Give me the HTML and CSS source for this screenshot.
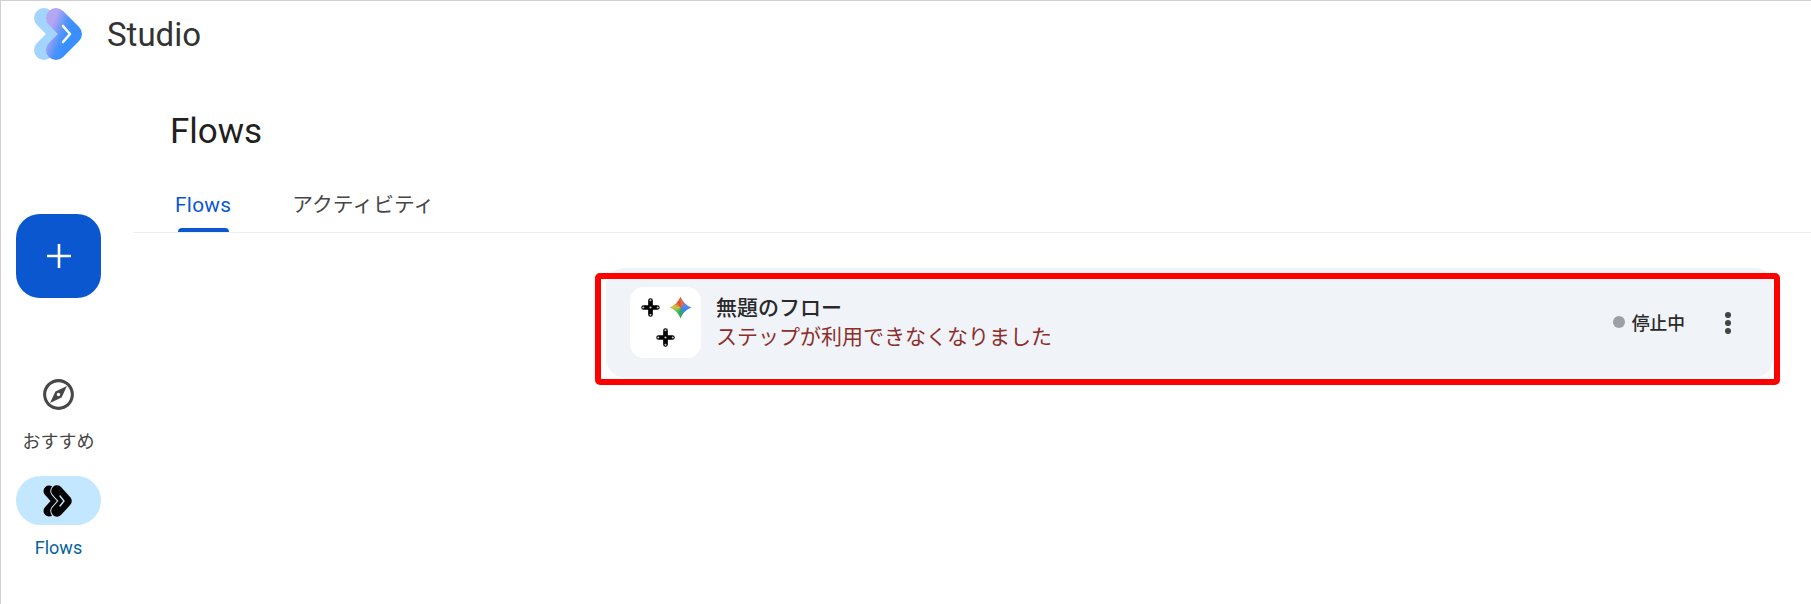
FILE: index.html
```html
<!DOCTYPE html>
<html lang="ja">
<head>
<meta charset="utf-8">
<title>Studio</title>
<link rel="stylesheet" href="styles.css">
</head>
<body>
<div class="app">
  <header class="topbar">
    <svg class="logo" width="52" height="56" viewBox="33 6 52 56" aria-hidden="true">
      <defs>
        <linearGradient id="logoGrad" gradientUnits="userSpaceOnUse" x1="48" y1="30" x2="68" y2="38">
          <stop offset="0.1" stop-color="#b3a6f3"/>
          <stop offset="0.7" stop-color="#4a93fb"/>
          <stop offset="1" stop-color="#3a8fff"/>
        </linearGradient>
      </defs>
      <path d="M44 18 L60 34 L44 50" fill="none" stroke="#a2d4fd" stroke-width="20" stroke-linecap="round" stroke-linejoin="round"/>
      <path d="M56 18 L72 34 L56 50" fill="none" stroke="url(#logoGrad)" stroke-width="20" stroke-linecap="round" stroke-linejoin="round"/>
      <path d="M63 26 L70 34 L63 42" fill="none" stroke="#fff" stroke-width="2.6" stroke-linecap="round" stroke-linejoin="round"/>
    </svg>
    <span class="brand">Studio</span>
  </header>
  <div class="layout">
    <nav class="rail">
      <button class="fab" aria-label="作成">
        <svg width="26" height="26" viewBox="0 0 26 26" aria-hidden="true"><path d="M13 1V25M1 13H25" stroke="#fff" stroke-width="2.6" fill="none"/></svg>
      </button>
      <a class="rail-item">
        <span class="rail-icon">
          <svg width="37" height="37" viewBox="0 0 24 24" aria-hidden="true"><path fill="#474747" d="M12 2C6.48 2 2 6.48 2 12s4.48 10 10 10 10-4.48 10-10S17.52 2 12 2zm0 18c-4.41 0-8-3.59-8-8s3.59-8 8-8 8 3.59 8 8-3.59 8-8 8zm-5.5-2.5l7.51-3.49L17.5 6.5 9.99 9.99 6.5 17.5zm5.5-6.6c.61 0 1.1.49 1.1 1.1s-.49 1.1-1.1 1.1-1.1-.49-1.1-1.1.49-1.1 1.1-1.1z"/></svg>
        </span>
        <span class="rail-label">おすすめ</span>
      </a>
      <a class="rail-item rail-item-active">
        <span class="rail-icon rail-pill">
          <svg width="34" height="34" viewBox="0 0 34 34" aria-hidden="true">
            <path d="M7 7 L16 17 L7 27" fill="none" stroke="#000" stroke-width="11" stroke-linecap="round" stroke-linejoin="round"/>
            <path d="M15 7 L24 17 L15 27" fill="none" stroke="#c2e7ff" stroke-width="13.5" stroke-linecap="round" stroke-linejoin="round"/>
            <path d="M15 7 L24 17 L15 27" fill="none" stroke="#000" stroke-width="11.5" stroke-linecap="round" stroke-linejoin="round"/>
            <path d="M18 12 L22 17 L18 22" fill="none" stroke="#c2e7ff" stroke-width="1.4" stroke-linecap="round" stroke-linejoin="round"/>
          </svg>
        </span>
        <span class="rail-label">Flows</span>
      </a>
    </nav>
    <main class="main">
      <h1 class="page-title">Flows</h1>
      <div class="tabs">
        <a class="tab tab-active">Flows</a>
        <a class="tab">アクティビティ</a>
      </div>
      <section class="card">
        <div class="thumb">
          <svg class="cross" width="19" height="19" viewBox="0 0 22 22" aria-hidden="true">
            <path d="M11 3V19M3 11H19" stroke="#000" stroke-width="5.4" stroke-linecap="round" fill="none"/>
            <g fill="#c8c8c8"><circle cx="11" cy="11" r="1.3"/><circle cx="11" cy="2.6" r="1.2"/><circle cx="11" cy="19.4" r="1.2"/><circle cx="2.6" cy="11" r="1.2"/><circle cx="19.4" cy="11" r="1.2"/></g>
          </svg>
          <span class="sparkle"></span>
          <svg class="cross cross-last" width="19" height="19" viewBox="0 0 22 22" aria-hidden="true">
            <path d="M11 3V19M3 11H19" stroke="#000" stroke-width="5.4" stroke-linecap="round" fill="none"/>
            <g fill="#c8c8c8"><circle cx="11" cy="11" r="1.3"/><circle cx="11" cy="2.6" r="1.2"/><circle cx="11" cy="19.4" r="1.2"/><circle cx="2.6" cy="11" r="1.2"/><circle cx="19.4" cy="11" r="1.2"/></g>
          </svg>
        </div>
        <div class="card-text">
          <div class="card-title">無題のフロー</div>
          <div class="card-error">ステップが利用できなくなりました</div>
        </div>
        <div class="status"><span class="status-dot"></span><span>停止中</span></div>
        <div class="kebab" aria-label="メニュー"><i></i><i></i><i></i></div>
        <div class="annotation"></div>
      </section>
    </main>
  </div>
</div>
</body>
</html>
```
FILE: styles.css
```css
* { box-sizing: border-box; }
html, body { margin: 0; height: 100%; background: #fff; }
body {
  font-family: Roboto, "Noto Sans CJK JP", sans-serif;
  color: #1f1f1f;
  overflow: hidden;
}
.app {
  height: 604px;
  border-top: 1px solid #d0d0d0;
  border-left: 1px solid #d0d0d0;
  display: flex;
  flex-direction: column;
}
.topbar {
  height: 70px;
  display: flex;
  align-items: flex-start;
  padding-left: 32px;
}
.logo { margin-top: 5px; flex: none; }
.brand {
  margin-left: 22px;
  margin-top: 15px;
  font-size: 33px;
  line-height: 38px;
  color: #333;
}
.layout { flex: 1; display: flex; min-height: 0; }
.rail {
  width: 132px;
  flex: none;
  padding: 143px 0 0 15px;
  display: flex;
  flex-direction: column;
}
.fab {
  width: 85px;
  height: 84px;
  border: 0;
  padding: 0;
  border-radius: 24px;
  background: #0b57d0;
  display: flex;
  align-items: center;
  justify-content: center;
}
.rail-item {
  width: 85px;
  display: flex;
  flex-direction: column;
  align-items: center;
  color: #444;
}
.fab + .rail-item { margin-top: 72px; }
.rail-item + .rail-item { margin-top: 21px; }
.rail-icon {
  width: 85px;
  height: 49px;
  display: flex;
  align-items: center;
  justify-content: center;
}
.rail-pill { background: #c2e7ff; border-radius: 25px; }
.rail-label {
  margin-top: 10px;
  font-size: 18px;
  line-height: 26px;
  white-space: nowrap;
}
.rail-item-active .rail-label { color: #04639c; }
.main { flex: 1; min-width: 0; display: flex; flex-direction: column; }
.page-title {
  margin: 38px 0 0 37px;
  font-size: 35px;
  line-height: 46px;
  font-weight: 400;
  color: #1f1f1f;
}
.tabs {
  margin-top: 19px;
  height: 59px;
  display: flex;
  align-items: flex-start;
  gap: 61px;
  padding-left: 42px;
  border-bottom: 1.5px solid #eceef0;
}
.tab {
  position: relative;
  height: 58px;
  padding-top: 17px;
  font-size: 20.8px;
  line-height: 28px;
  color: #474747;
  white-space: nowrap;
}
.tab-active { color: #0b57d0; letter-spacing: 0.3px; }
.tab-active::after {
  content: "";
  position: absolute;
  left: 3px;
  right: 2px;
  bottom: 0;
  height: 4px;
  background: #0b57d0;
  border-radius: 4px 4px 0 0;
}
.card {
  position: relative;
  align-self: flex-end;
  width: 1167px;
  height: 109px;
  margin: 35px 38px 0 0;
  padding: 0 0 0 24px;
  background: #f0f3f8;
  border-radius: 18px;
  display: flex;
  align-items: center;
}
.thumb {
  width: 71px;
  height: 71px;
  flex: none;
  background: #fff;
  border-radius: 14px;
  display: grid;
  grid-template-columns: 30px 30px;
  grid-template-rows: 30px 30px;
  justify-content: center;
  align-content: center;
  justify-items: center;
  align-items: center;
}
.cross-last { grid-column: 1 / 3; }
.sparkle {
  width: 22px;
  height: 22px;
  background: conic-gradient(from 0deg, #ec6a3c 0deg, #4f8bf5 70deg, #3b82f6 120deg, #35a853 190deg, #4cc26a 230deg, #d5c23a 280deg, #ea4335 340deg, #ec6a3c 360deg);
  clip-path: path("M11 0 Q14 8 22 11 Q14 14 11 22 Q8 14 0 11 Q8 8 11 0 Z");
}
.card-text { margin-left: 15px; flex: 1; min-width: 0; }
.card-title {
  font-size: 21px;
  line-height: 29px;
  font-weight: 500;
  color: #2a2a2a;
}
.card-error {
  font-size: 21px;
  line-height: 29px;
  color: #8c2f2b;
}
.status {
  display: flex;
  align-items: center;
  gap: 7px;
  margin-top: -2px;
  font-size: 17.8px;
  font-weight: 500;
  color: #2a2a2a;
}
.status-dot { width: 12px; height: 12px; border-radius: 50%; background: #9aa0a6; }
.kebab {
  width: 6px;
  margin: 0 42px 0 40px;
  display: flex;
  flex-direction: column;
  gap: 2px;
}
.kebab i { display: block; width: 6px; height: 6px; border-radius: 50%; background: #444; }
.annotation {
  position: absolute;
  left: -11px;
  right: -7px;
  top: 5px;
  bottom: -8px;
  border: 6px solid #ff0000;
  border-radius: 5px;
  pointer-events: none;
}
```
